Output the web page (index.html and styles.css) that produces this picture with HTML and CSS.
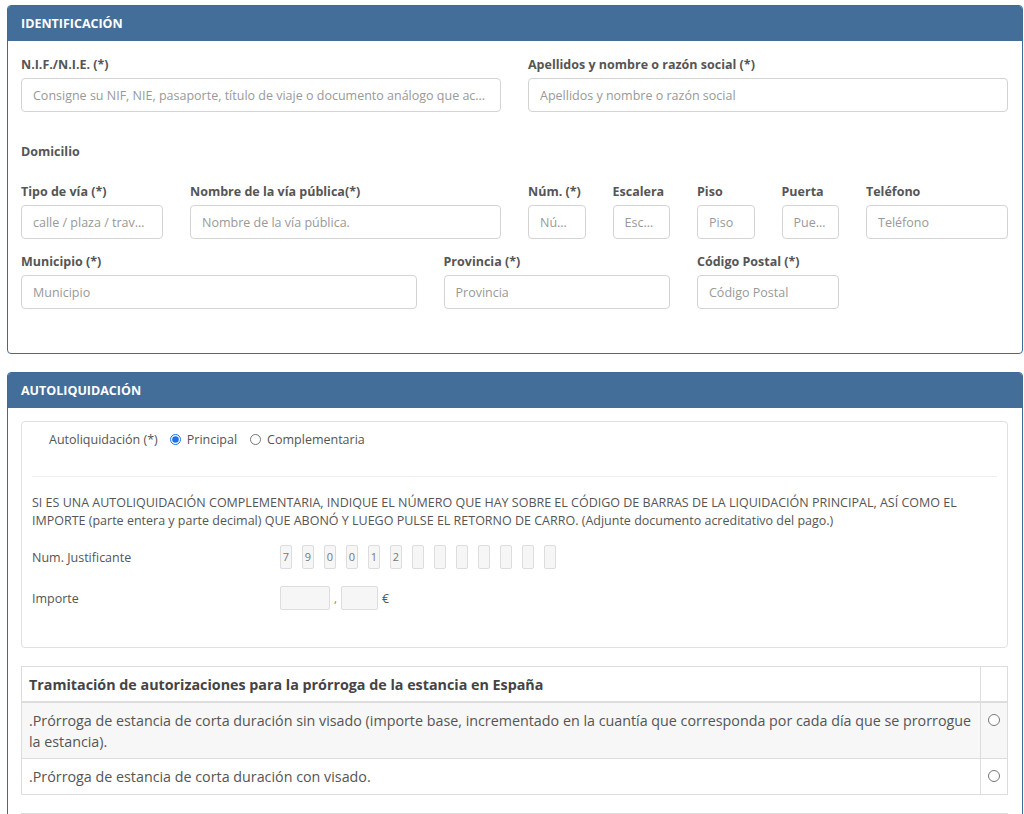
FILE: index.html
```html
<!DOCTYPE html>
<html lang="es">
<head>
<meta charset="utf-8">
<title>Autoliquidación</title>
<link rel="stylesheet" href="styles.css">
</head>
<body>
<div class="page">
  <section class="panel">
    <div class="panel-heading">IDENTIFICACIÓN</div>
    <div class="panel-body">
      <div class="grid">
        <div class="field c6">
          <label>N.I.F./N.I.E. (*)</label>
          <input type="text" placeholder="Consigne su NIF, NIE, pasaporte, título de viaje o documento análogo que acredite su identidad">
        </div>
        <div class="field c6">
          <label>Apellidos y nombre o razón social (*)</label>
          <input type="text" placeholder="Apellidos y nombre o razón social">
        </div>
      </div>
      <div class="subtitle">Domicilio</div>
      <div class="grid">
        <div class="field c2">
          <label>Tipo de vía (*)</label>
          <input type="text" placeholder="calle / plaza / travesía">
        </div>
        <div class="field c4">
          <label>Nombre de la vía pública(*)</label>
          <input type="text" placeholder="Nombre de la vía pública.">
        </div>
        <div class="field c1">
          <label>Núm. (*)</label>
          <input type="text" placeholder="Número">
        </div>
        <div class="field c1">
          <label>Escalera</label>
          <input type="text" placeholder="Escalera">
        </div>
        <div class="field c1">
          <label>Piso</label>
          <input type="text" placeholder="Piso">
        </div>
        <div class="field c1">
          <label>Puerta</label>
          <input type="text" placeholder="Puerta">
        </div>
        <div class="field c2">
          <label>Teléfono</label>
          <input type="text" placeholder="Teléfono">
        </div>
        <div class="field c5">
          <label>Municipio (*)</label>
          <input type="text" placeholder="Municipio">
        </div>
        <div class="field c3">
          <label>Provincia (*)</label>
          <input type="text" placeholder="Provincia">
        </div>
        <div class="field c2">
          <label>Código Postal (*)</label>
          <input type="text" placeholder="Código Postal">
        </div>
      </div>
    </div>
  </section>

  <section class="panel">
    <div class="panel-heading">AUTOLIQUIDACIÓN</div>
    <div class="panel-body body-2">
      <div class="well">
        <div class="radio-row">
          <span class="radio-label">Autoliquidación (*)</span>
          <label class="opt"><input type="radio" name="tipo" checked> Principal</label>
          <label class="opt"><input type="radio" name="tipo"> Complementaria</label>
        </div>
        <hr class="sep">
        <p class="note">SI ES UNA AUTOLIQUIDACIÓN COMPLEMENTARIA, INDIQUE EL NÚMERO QUE HAY SOBRE EL CÓDIGO DE BARRAS DE LA LIQUIDACIÓN PRINCIPAL, ASÍ COMO EL IMPORTE (parte entera y parte decimal) QUE ABONÓ Y LUEGO PULSE EL RETORNO DE CARRO. (Adjunte documento acreditativo del pago.)</p>
        <div class="line-row">
          <span class="line-label">Num. Justificante</span>
          <div class="digits">
            <span class="digit">7</span><span class="digit">9</span><span class="digit">0</span><span class="digit">0</span><span class="digit">1</span><span class="digit">2</span><span class="digit"></span><span class="digit"></span><span class="digit"></span><span class="digit"></span><span class="digit"></span><span class="digit"></span><span class="digit"></span>
          </div>
        </div>
        <div class="line-row amount-row">
          <span class="line-label">Importe</span>
          <div class="amount">
            <span class="box box-int"></span><span class="comma">,</span><span class="box box-dec"></span><span class="euro">€</span>
          </div>
        </div>
      </div>

      <table class="tasas">
        <thead>
          <tr><th>Tramitación de autorizaciones para la prórroga de la estancia en España</th><th class="sel"></th></tr>
        </thead>
        <tbody>
          <tr class="odd"><td>.Prórroga de estancia de corta duración sin visado (importe base, incrementado en la cuantía que corresponda por cada día que se prorrogue la estancia).</td><td class="sel"><input type="radio" name="tasa"></td></tr>
          <tr><td>.Prórroga de estancia de corta duración con visado.</td><td class="sel"><input type="radio" name="tasa"></td></tr>
        </tbody>
      </table>
      <div class="next-table"></div>
    </div>
  </section>
</div>
</body>
</html>
```

FILE: styles.css
```css
* { box-sizing: border-box; }
html, body { margin: 0; padding: 0; background: #fff; }
body {
  font-family: "Open Sans", "Liberation Sans", sans-serif;
  font-size: 12.5px;
  color: #555;
  overflow: hidden;
  height: 814px;
}
.page { padding: 5px 1px 0 7px; }

.panel {
  border: 1px solid #3f6a98;
  border-radius: 4px;
  margin-bottom: 18px;
  background: #fff;
}
.panel-heading {
  background: #436e9a;
  color: #fff;
  font-weight: 700;
  font-size: 12.5px;
  height: 35px;
  line-height: 35px;
  padding: 0 13px;
  border-radius: 3px 3px 0 0;
}
.panel-body { padding: 15px 0 30px; }

.grid {
  display: grid;
  grid-template-columns: repeat(12, 1fr);
  column-gap: 27px;
  padding: 0 14px 0 13px;
}
.c1 { grid-column: span 1; }
.c2 { grid-column: span 2; }
.c3 { grid-column: span 3; }
.c4 { grid-column: span 4; }
.c5 { grid-column: span 5; }
.c6 { grid-column: span 6; }

.field { margin-bottom: 14px; min-width: 0; }
.field label, .subtitle {
  display: block;
  font-weight: 700;
  font-size: 12.5px;
  line-height: 17px;
  color: #555;
}
.field label { margin-bottom: 5px; white-space: nowrap; }
.subtitle { margin: 17px 13px 23px; }

.field input {
  display: block;
  width: 100%;
  height: 34px;
  border: 1px solid #d4d4d4;
  border-radius: 4px;
  padding: 0 11px;
  font-family: inherit;
  font-size: 12.5px;
  color: #555;
  background: #fff;
  text-overflow: ellipsis;
}
.field input::placeholder { color: #999; opacity: 1; }

.body-2 { padding: 13px 14px 0 13px; }

.well {
  border: 1px solid #e1e1e1;
  border-radius: 4px;
  padding: 8px 10px 37px;
  margin-bottom: 18px;
}
.radio-row {
  display: flex;
  align-items: center;
  padding-left: 17px;
  height: 18px;
  font-size: 12.5px;
  color: #555;
}
.radio-label { margin-right: 12px; }
.opt { display: flex; align-items: center; margin-right: 13px; }
.opt input {
  margin: 0 6px 0 0;
  width: 11px;
  height: 11px;
  accent-color: #1a73e8;
}
.sep {
  border: 0;
  border-top: 1px solid #eee;
  margin: 28px 0 17px;
}
.note {
  margin: 0 0 15px;
  font-size: 12.5px;
  line-height: 18px;
  color: #555;
}
.line-row {
  display: flex;
  align-items: center;
  height: 24px;
}
.amount-row { margin-top: 17px; }
.line-label { width: 248px; flex: none; font-size: 12.5px; }
.digits { display: flex; gap: 10px; }
.digit {
  width: 12px;
  height: 24px;
  border: 1px solid #ddd;
  border-radius: 2px;
  background: #f6f6f6;
  font-size: 11px;
  line-height: 22px;
  text-align: center;
  color: #777;
}
.amount { display: flex; align-items: center; }
.box {
  height: 24px;
  border: 1px solid #ddd;
  border-radius: 2px;
  background: #f6f6f6;
}
.box-int { width: 50px; }
.box-dec { width: 37px; }
.comma { width: 11px; text-align: center; font-size: 11px; color: #777; }
.euro { margin-left: 4px; font-size: 12.5px; color: #555; }

.tasas {
  width: 100%;
  border-collapse: collapse;
  border: 1px solid #ddd;
  font-size: 14.3px;
  color: #555;
  margin-bottom: 18px;
}
.tasas th, .tasas td {
  border: 1px solid #ddd;
  padding: 7px 7px;
  line-height: 21px;
  text-align: left;
  vertical-align: top;
}
.tasas th { font-weight: 700; color: #444; border-bottom-width: 2px; padding-bottom: 6px; }
.tasas tr.odd td { background: #f7f7f7; padding-bottom: 6px; }
.tasas .sel { width: 27px; padding-left: 0; padding-right: 0; text-align: center; }
.tasas .sel input { margin: 4px 0 0; width: 12px; height: 12px; }
.next-table {
  border-top: 1px solid #ddd;
  height: 20px;
}
```
